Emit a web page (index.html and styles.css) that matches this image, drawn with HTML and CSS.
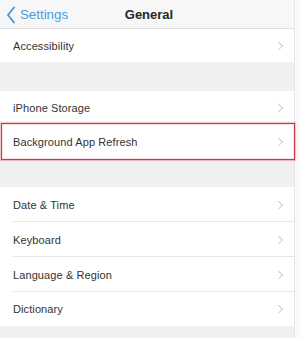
FILE: index.html
```html
<!DOCTYPE html>
<html>
<head>
<meta charset="utf-8">
<link rel="stylesheet" href="styles.css">
</head>
<body>
<div class="screen">
  <div class="main">
    <header class="nav">
      <div class="back">
        <svg class="back-icon" width="10" height="18" viewBox="0 0 10 18"><polyline points="8,1.5 2,9 8,16.5" fill="none" stroke="#4a9be0" stroke-width="2" stroke-linecap="round" stroke-linejoin="round"/></svg>
        <span class="back-text">Settings</span>
      </div>
      <div class="title">General</div>
    </header>
    <section class="group g1">
      <div class="row h33"><span class="label">Accessibility</span><span class="chev"></span></div>
    </section>
    <div class="gap gap1"></div>
    <section class="group">
      <div class="row h33 sep"><span class="label">iPhone Storage</span><span class="chev"></span></div>
      <div class="row h35 marked"><span class="label">Background App Refresh</span><span class="chev"></span><span class="highlight"></span></div>
    </section>
    <div class="gap gap2"></div>
    <section class="group">
      <div class="row h35 sep"><span class="label">Date &amp; Time</span><span class="chev"></span></div>
      <div class="row h35 sep"><span class="label">Keyboard</span><span class="chev"></span></div>
      <div class="row h35 sep"><span class="label">Language &amp; Region</span><span class="chev"></span></div>
      <div class="row h34"><span class="label">Dictionary</span><span class="chev"></span></div>
    </section>
    <div class="gap gap3"></div>
  </div>
  <div class="edge"></div>
</div>
</body>
</html>
```
FILE: styles.css
```css
html, body {
  margin: 0;
  padding: 0;
  width: 300px;
  height: 338px;
  overflow: hidden;
  background: #f9f9f9;
  font-family: "Liberation Sans", Arial, sans-serif;
}
.screen {
  display: flex;
  width: 300px;
  height: 338px;
}
.main {
  width: 294px;
  border-right: 1px solid #e6e6e8;
  display: flex;
  flex-direction: column;
  background: #f0f0f2;
}
.edge {
  flex: 1;
  background: #fafafa;
}
.nav {
  height: 28px;
  border-bottom: 1px solid #dedede;
  background: #f7f7f7;
  display: grid;
  grid-template-columns: 1fr;
  align-items: center;
}
.back {
  display: flex;
  align-items: center;
  padding-left: 6px;
  gap: 4px;
  grid-area: 1 / 1;
}
.back-icon {
  display: block;
  margin-top: 1px;
}
.back-text {
  color: #4a9be0;
  font-size: 13.3px;
}
.title {
  grid-area: 1 / 1;
  justify-self: center;
  font-weight: bold;
  font-size: 13px;
  color: #262626;
  margin-left: 4px;
}
.group {
  background: #fff;
  display: flex;
  flex-direction: column;
}
.row {
  display: flex;
  align-items: center;
  justify-content: space-between;
  padding-left: 13px;
  padding-right: 11px;
  box-sizing: border-box;
  position: relative;
}
.h33 { height: 33px; }
.h34 { height: 34px; }
.h35 { height: 35px; }
.sep::after {
  content: "";
  position: absolute;
  left: 13px;
  right: 0;
  bottom: 0;
  height: 1px;
  background: #e6e6e8;
}
.label {
  font-size: 11px;
  color: #333;
  letter-spacing: 0.1px;
}
.chev {
  width: 4.5px;
  height: 4.5px;
  border-top: 1.2px solid #cacace;
  border-right: 1.2px solid #cacace;
  transform: rotate(45deg);
  margin-right: 2px;
}
.gap1 { height: 29px; }
.gap2 { height: 28px; }
.gap3 { flex: 1; }
.highlight {
  position: absolute;
  left: 1px;
  right: -1px;
  top: -1px;
  bottom: -1px;
  border: 1.5px solid #c83a48;
  box-shadow: 0 0 1px 1px rgba(230, 130, 140, 0.45), inset 0 0 1px 1px rgba(240, 160, 170, 0.35);
}
```
